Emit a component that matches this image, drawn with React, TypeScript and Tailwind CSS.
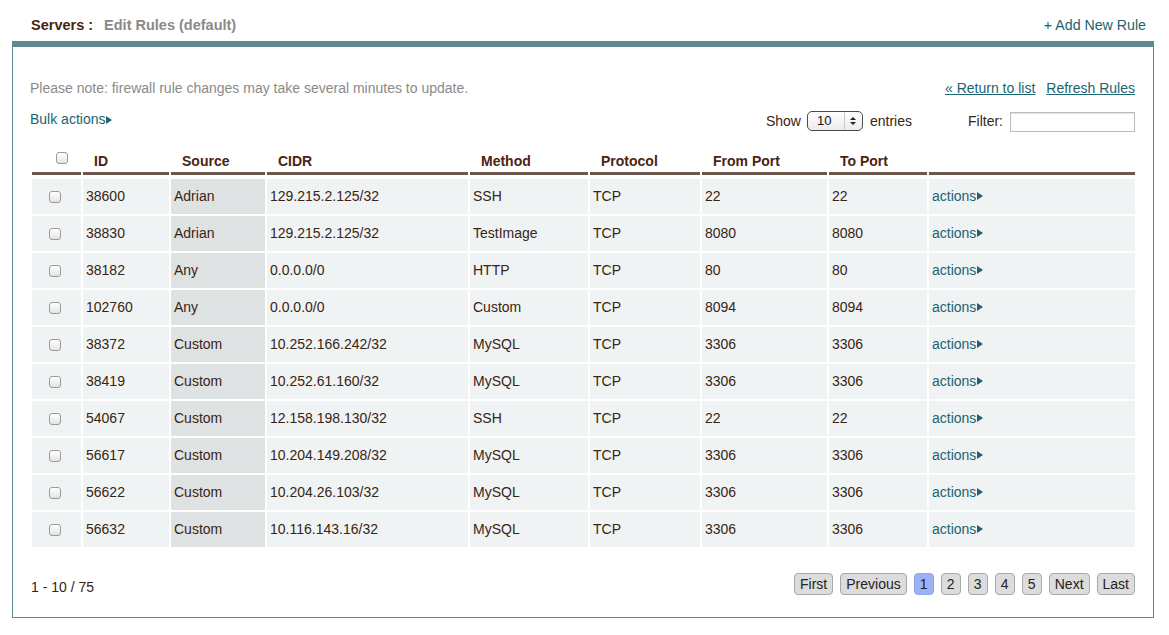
const rows = [
  { id: '38600', source: 'Adrian', cidr: '129.215.2.125/32', method: 'SSH', from: '22', to: '22' },
  { id: '38830', source: 'Adrian', cidr: '129.215.2.125/32', method: 'TestImage', from: '8080', to: '8080' },
  { id: '38182', source: 'Any', cidr: '0.0.0.0/0', method: 'HTTP', from: '80', to: '80' },
  { id: '102760', source: 'Any', cidr: '0.0.0.0/0', method: 'Custom', from: '8094', to: '8094' },
  { id: '38372', source: 'Custom', cidr: '10.252.166.242/32', method: 'MySQL', from: '3306', to: '3306' },
  { id: '38419', source: 'Custom', cidr: '10.252.61.160/32', method: 'MySQL', from: '3306', to: '3306' },
  { id: '54067', source: 'Custom', cidr: '12.158.198.130/32', method: 'SSH', from: '22', to: '22' },
  { id: '56617', source: 'Custom', cidr: '10.204.149.208/32', method: 'MySQL', from: '3306', to: '3306' },
  { id: '56622', source: 'Custom', cidr: '10.204.26.103/32', method: 'MySQL', from: '3306', to: '3306' },
  { id: '56632', source: 'Custom', cidr: '10.116.143.16/32', method: 'MySQL', from: '3306', to: '3306' },
];

const headers = ['ID', 'Source', 'CIDR', 'Method', 'Protocol', 'From Port', 'To Port', ''];

// column template shared by header and body grids
const cols = 'grid grid-cols-[49px_86px_94px_201px_118px_110px_125px_98px_1fr] gap-x-[2px] ml-[2px]';

function Arrow() {
  return (
    <svg className="inline-block w-[6px] h-[8px] ml-[1px] mb-[1px]" viewBox="0 0 6 8">
      <path d="M0 0 L6 4 L0 8 Z" fill="#1b6470" />
    </svg>
  );
}

function Checkbox() {
  return (
    <span className="block w-[12px] h-[12px] rounded-[3px] border border-[#9b9b9b] bg-gradient-to-b from-white to-[#e4e4e4]" />
  );
}

function PageButton({ label, active }: { label: string; active?: boolean }) {
  return (
    <span
      className={`h-[22px] px-[5px] min-w-[20px] flex items-center justify-center rounded-[4px] border text-[14px] leading-none ${
        active ? 'bg-[#9db1f7] border-[#8ea2e6] text-[#222]' : 'bg-[#dcdcdc] border-[#a9a9a9] text-[#222]'
      }`}
    >
      {label}
    </span>
  );
}

export default function App() {
  return (
    <div className="w-[1169px] h-[635px] bg-white font-['Liberation_Sans',Arial,sans-serif] text-[14px] text-[#3a2412]">
      {/* Title bar */}
      <div className="h-[41px] flex items-center justify-between pl-[31px] pr-[23px] pt-[14px] pb-[3px]">
        <div className="flex items-center gap-[11px] font-bold text-[14.5px]">
          <span className="text-[#4a2410]">Servers :</span>
          <span className="text-[#8a8a8a]">Edit Rules (default)</span>
        </div>
        <span className="text-[#1b6470] text-[14.2px]">+ Add New Rule</span>
      </div>

      {/* Panel */}
      <div className="mx-[12px] w-[1142px] border-t-[6px] border-x border-b border-[#5e8a90] pt-[31px] pl-[17px] pr-[18px] pb-[22px]">
        <div className="h-[20px] flex items-center justify-between">
          <span className="text-[#8a8a8a]">Please note: firewall rule changes may take several minutes to update.</span>
          <div className="flex items-center gap-[11px] text-[#1b6470] underline">
            <span>« Return to list</span>
            <span>Refresh Rules</span>
          </div>
        </div>

        <div className="mt-[12px] h-[22px] flex items-start">
          <span className="text-[#1b6470] leading-[18px]">
            Bulk actions
            <Arrow />
          </span>
          <div className="flex-1" />
          <div className="flex items-center h-[22px]">
            <span>Show</span>
            <span className="ml-[6px] w-[56px] h-[20px] rounded-[5px] border border-[#4a4a4a] bg-gradient-to-b from-white to-[#ececec] flex items-center">
              <span className="flex-1 pl-[9px] text-[13px] text-[#111]">10</span>
              <span className="w-[18px] h-full border-l border-[#c8c8c8] flex flex-col items-center justify-center gap-[2px]">
                <svg className="w-[6px] h-[3px]" viewBox="0 0 6 3"><path d="M0 3 L3 0 L6 3 Z" fill="#222" /></svg>
                <svg className="w-[6px] h-[3px]" viewBox="0 0 6 3"><path d="M0 0 L3 3 L6 0 Z" fill="#222" /></svg>
              </span>
            </span>
            <span className="ml-[7px]">entries</span>
            <span className="ml-[56px]">Filter:</span>
            <span className="ml-[7px] w-[125px] h-[20px] mt-[2px] border border-[#bdbdbd] shadow-[inset_0_1px_1px_rgba(0,0,0,0.12)] bg-white" />
          </div>
        </div>

        {/* Table header */}
        <div className={`${cols} mt-[18px]`}>
          <div className="h-[25px] border-b-[3px] border-[#6b574b] flex items-start justify-center pt-[2px] pl-[10px]">
            <Checkbox />
          </div>
          {headers.map((h, i) => (
            <div
              key={i}
              className="h-[25px] border-b-[3px] border-[#6b574b] pl-[11px] pt-[1px] font-bold text-[#4a2410] leading-[20px]"
            >
              {h}
            </div>
          ))}
        </div>

        {/* Table body */}
        <div className="mt-[4px] flex flex-col gap-y-[2px]">
          {rows.map((r) => (
            <div key={r.id} className={`${cols} h-[35px]`}>
              <div className="bg-[#eff3f4] flex items-center justify-center pr-[3px]">
                <Checkbox />
              </div>
              <div className="bg-[#eff3f4] flex items-center pl-[3px]">{r.id}</div>
              <div className="bg-[#dfe2e3] flex items-center pl-[3px]">{r.source}</div>
              <div className="bg-[#eff3f4] flex items-center pl-[3px]">{r.cidr}</div>
              <div className="bg-[#eff3f4] flex items-center pl-[3px]">{r.method}</div>
              <div className="bg-[#eff3f4] flex items-center pl-[3px]">TCP</div>
              <div className="bg-[#eff3f4] flex items-center pl-[3px]">{r.from}</div>
              <div className="bg-[#eff3f4] flex items-center pl-[3px]">{r.to}</div>
              <div className="bg-[#eff3f4] flex items-center pl-[3px] text-[#1b6470]">
                actions
                <Arrow />
              </div>
            </div>
          ))}
        </div>

        {/* Footer */}
        <div className="mt-[26px] h-[22px] flex items-center justify-between">
          <span className="pt-[6px] pl-[1px]">1 - 10 / 75</span>
          <div className="flex items-center gap-[7px]">
            <PageButton label="First" />
            <PageButton label="Previous" />
            <PageButton label="1" active />
            <PageButton label="2" />
            <PageButton label="3" />
            <PageButton label="4" />
            <PageButton label="5" />
            <PageButton label="Next" />
            <PageButton label="Last" />
          </div>
        </div>
      </div>
    </div>
  );
}
